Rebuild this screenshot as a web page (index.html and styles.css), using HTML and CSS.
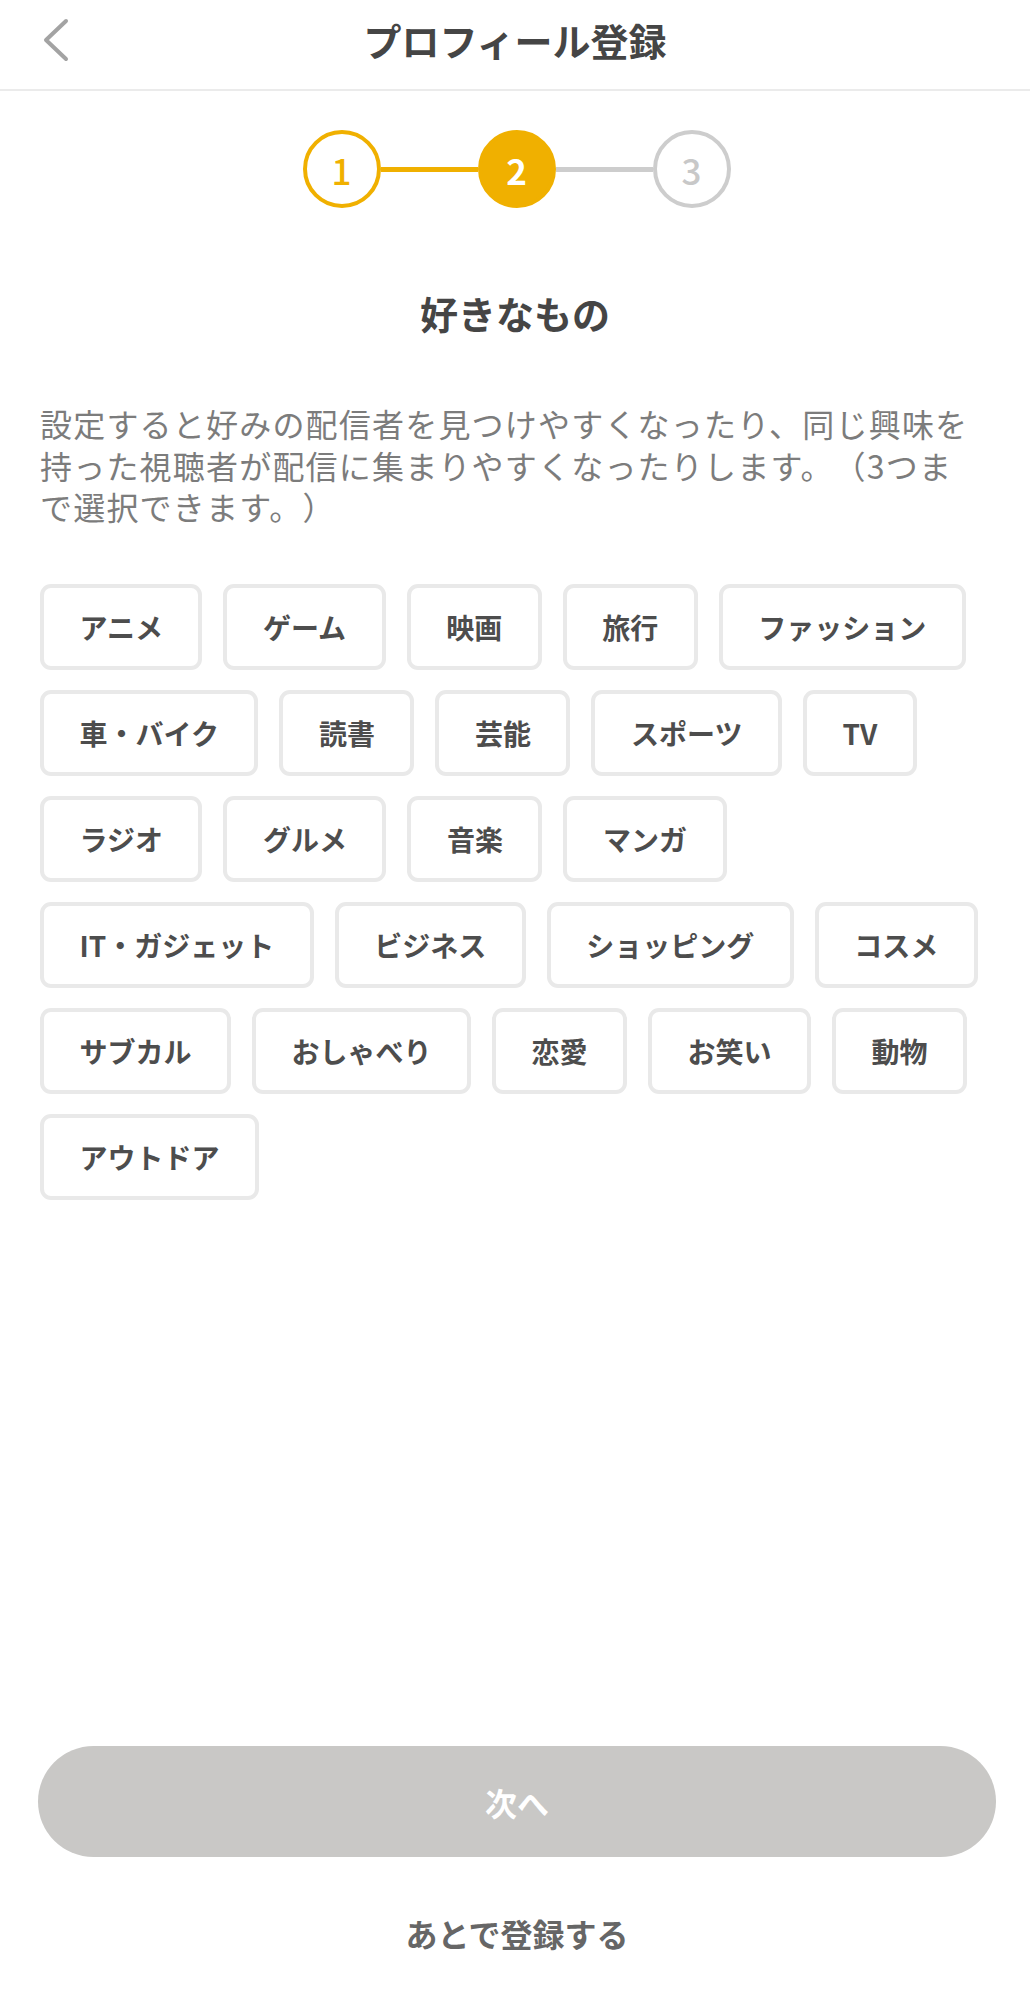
FILE: index.html
```html
<!DOCTYPE html>
<html lang="ja">
<head>
<meta charset="utf-8">
<title>プロフィール登録</title>
<link rel="stylesheet" href="styles.css">
</head>
<body>
<div class="page">
  <header class="topbar">
    <div class="topbar-left">
      <svg class="back" width="30" height="46" viewBox="0 0 30 46" aria-hidden="true">
        <path d="M24 4 L4 23 L24 42" fill="none" stroke="#a3a3a3" stroke-width="4" stroke-linecap="round" stroke-linejoin="round"/>
      </svg>
    </div>
    <h1 class="title">プロフィール登録</h1>
    <div class="topbar-right"></div>
  </header>

  <main class="content">
    <div class="stepper">
      <div class="step step-done">1</div>
      <div class="step-line step-line-active"></div>
      <div class="step step-current">2</div>
      <div class="step-line"></div>
      <div class="step step-todo">3</div>
    </div>

    <h2 class="heading">好きなもの</h2>

    <p class="desc">設定すると好みの配信者を見つけやすくなったり、同じ興味を<br>持った視聴者が配信に集まりやすくなったりします。（3つま<br>で選択できます。）</p>

    <ul class="tags">
      <li class="tag">アニメ</li>
      <li class="tag">ゲーム</li>
      <li class="tag">映画</li>
      <li class="tag">旅行</li>
      <li class="tag">ファッション</li>
      <li class="tag">車・バイク</li>
      <li class="tag">読書</li>
      <li class="tag">芸能</li>
      <li class="tag">スポーツ</li>
      <li class="tag">TV</li>
      <li class="tag">ラジオ</li>
      <li class="tag">グルメ</li>
      <li class="tag">音楽</li>
      <li class="tag">マンガ</li>
      <li class="tag">IT・ガジェット</li>
      <li class="tag">ビジネス</li>
      <li class="tag">ショッピング</li>
      <li class="tag">コスメ</li>
      <li class="tag">サブカル</li>
      <li class="tag">おしゃべり</li>
      <li class="tag">恋愛</li>
      <li class="tag">お笑い</li>
      <li class="tag">動物</li>
      <li class="tag">アウトドア</li>
    </ul>
  </main>

  <footer class="footer">
    <button class="next" type="button" disabled>次へ</button>
    <a class="later" href="#">あとで登録する</a>
  </footer>
</div>
</body>
</html>
```

FILE: styles.css
```css
* {
  box-sizing: border-box;
}

html, body {
  margin: 0;
  padding: 0;
  background: #ffffff;
}

body {
  font-family: "Noto Sans CJK JP", "Noto Sans", sans-serif;
  color: #4a4a4a;
}

.page {
  min-height: 1999px;
  display: flex;
  flex-direction: column;
}

/* Header */
.topbar {
  height: 91px;
  border-bottom: 2px solid #ebebeb;
  display: grid;
  grid-template-columns: 1fr auto 1fr;
  align-items: center;
  padding-bottom: 10px;
}

.topbar-left {
  padding-left: 42px;
  display: flex;
  align-items: center;
}

.back {
  display: block;
}

.title {
  margin: 0;
  font-size: 38px;
  font-weight: 700;
  line-height: 1.2;
  color: #454545;
  text-align: center;
}

/* Content */
.content {
  padding: 0 40px;
}

.stepper {
  margin-top: 39px;
  display: flex;
  justify-content: center;
  align-items: center;
  padding-left: 3px;
}

.step {
  width: 78px;
  height: 78px;
  border-radius: 50%;
  border: 4px solid #f0b000;
  display: flex;
  align-items: center;
  justify-content: center;
  font-size: 35px;
  font-weight: 500;
  line-height: 1;
  flex: none;
}

.step-done {
  color: #f0b000;
  background: #ffffff;
}

.step-current {
  background: #f0b000;
  color: #ffffff;
  font-weight: 700;
}

.step-todo {
  border-color: #cdcdcd;
  color: #c8c8c8;
}

.step-line {
  width: 97px;
  height: 5px;
  background: #cdcdcd;
  flex: none;
}

.step-line-active {
  background: #f0b000;
}

.heading {
  margin: 80px 0 0;
  font-size: 38px;
  font-weight: 700;
  line-height: 50px;
  text-align: center;
  color: #454545;
}

.desc {
  margin: 65px -20px 0 0;
  font-size: 32px;
  line-height: 41.5px;
  letter-spacing: 1.2px;
  color: #7c7c7c;
  font-weight: 400;
  white-space: nowrap;
  text-spacing-trim: space-all;
}

.tags {
  list-style: none;
  margin: 56px 0 0;
  padding: 0;
  display: flex;
  flex-wrap: wrap;
  gap: 20px 21px;
}

.tag {
  height: 86px;
  padding: 0 35.5px;
  border: 4px solid #e9e9e9;
  border-radius: 11px;
  display: flex;
  align-items: center;
  font-size: 28px;
  font-weight: 700;
  color: #4d4d4d;
  line-height: 1;
  background: #ffffff;
}

/* Footer */
.footer {
  margin-top: auto;
  padding: 0 34px 43px 38px;
  display: flex;
  flex-direction: column;
  align-items: center;
}

.next {
  width: 100%;
  height: 111px;
  border: none;
  border-radius: 56px;
  background: #c9c8c6;
  color: #ffffff;
  font-family: inherit;
  font-size: 32px;
  font-weight: 700;
  line-height: 1;
  padding: 0;
}

.later {
  margin-top: 53px;
  font-size: 32px;
  font-weight: 700;
  line-height: 46px;
  color: #666666;
  text-decoration: none;
}
```
